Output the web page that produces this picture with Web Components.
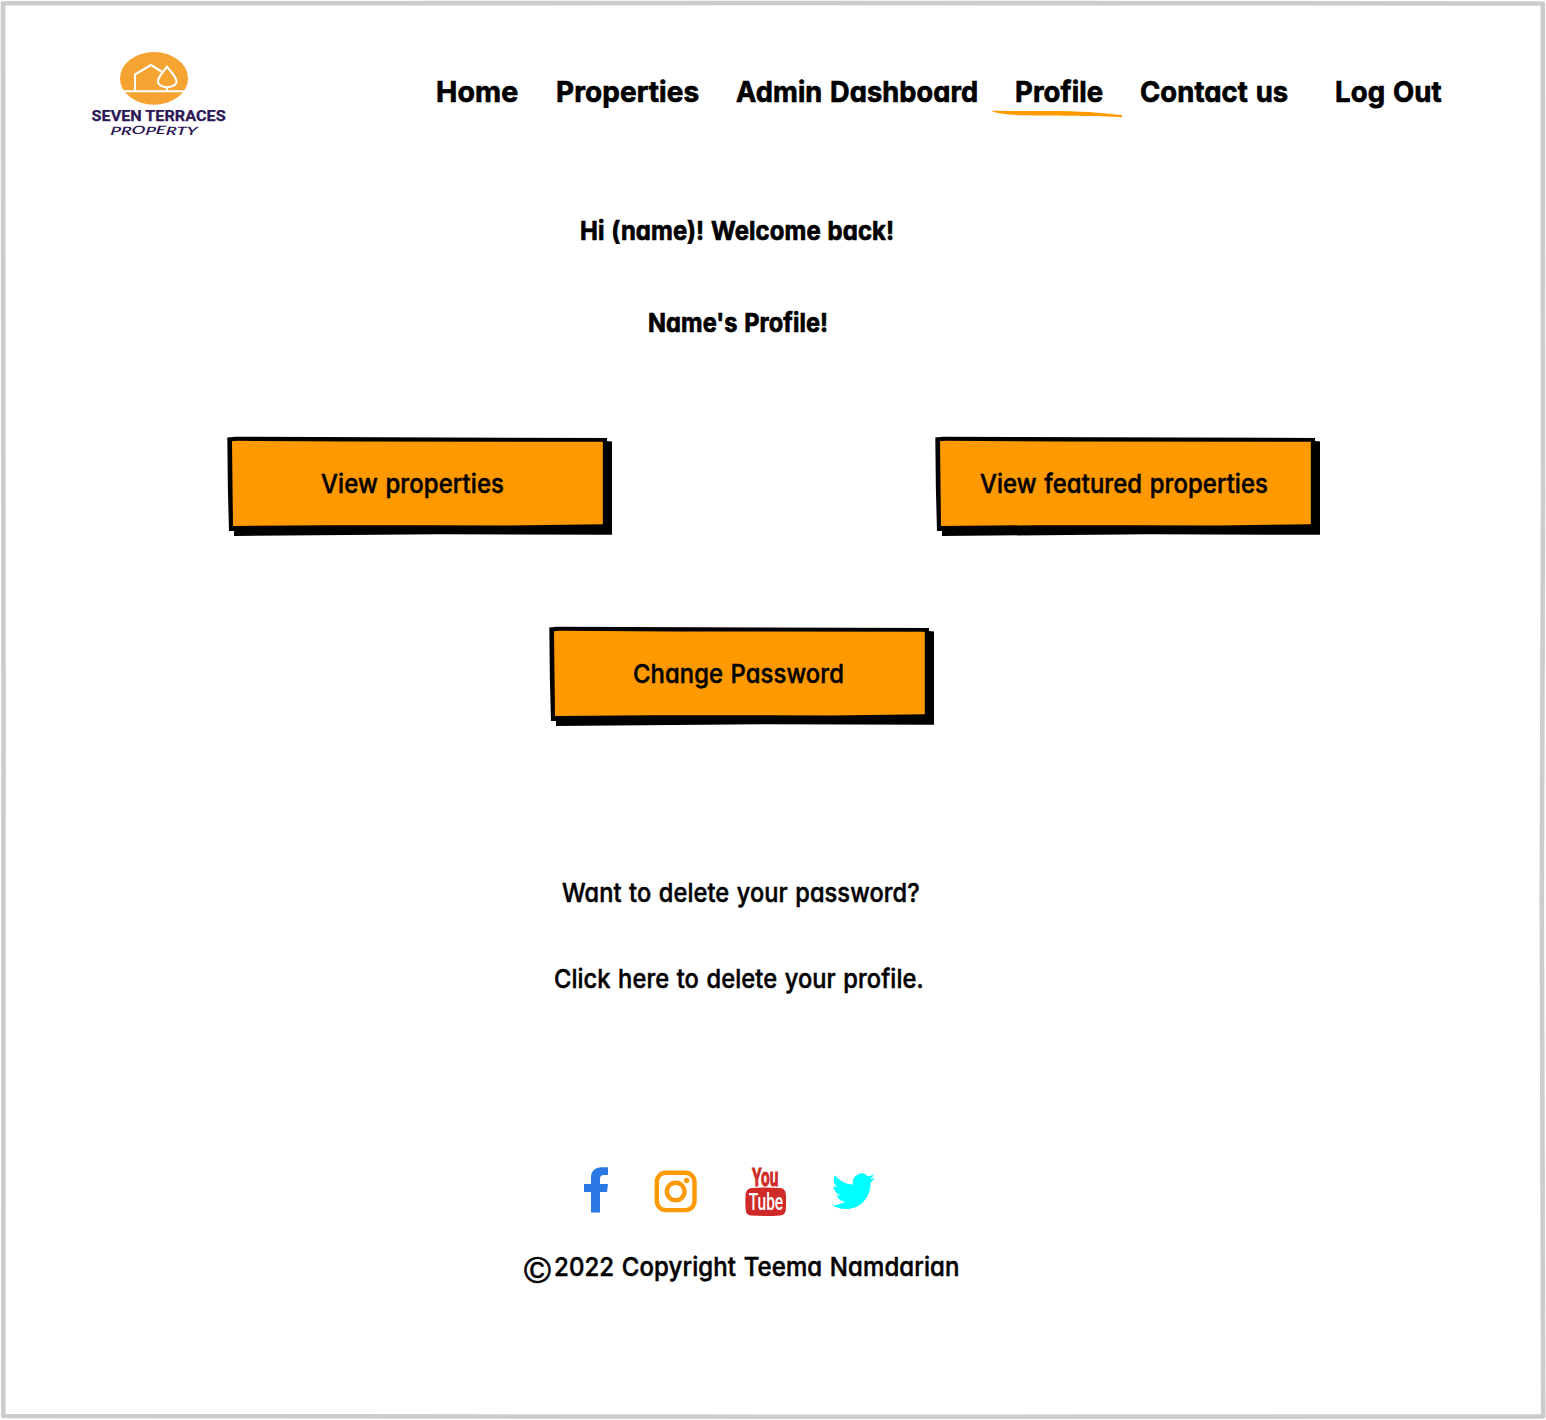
<!DOCTYPE html>
<html lang="en">
<head>
<meta charset="utf-8">
<title>Seven Terraces Property</title>
<style>
html,body{margin:0;background:#fff}
</style>
</head>
<body>
<profile-page></profile-page>
<script>
const define = (name, html, init) => {
  const t = document.createElement('template');
  t.innerHTML = html;
  customElements.define(name, class extends HTMLElement {
    connectedCallback() {
      if (this.shadowRoot) return;
      this.attachShadow({mode: 'open'}).append(t.content.cloneNode(true));
      if (init) init.call(this, this.shadowRoot);
    }
  });
};

/* One line of lettering, condensed so that its ink fills the given width. */
const pen = document.createElement('canvas').getContext('2d');
class SketchText extends HTMLElement {
  connectedCallback() {
    if (this.shadowRoot) return;
    const root = this.attachShadow({mode: 'open'});
    root.innerHTML = `<style>
      :host{display:block;flex:none;white-space:nowrap;line-height:40px;height:40px;color:#000;
        font-feature-settings:"cv11" 1,"calt" 0;font-kerning:normal}
      span{display:inline-block;transform-origin:0 50%;-webkit-text-stroke:var(--ink,.5px) #000;stroke-linejoin:round}
    </style><span><slot></slot></span>`;
    const w = +this.getAttribute('w'), size = +(this.getAttribute('size') || 26), weight = this.getAttribute('weight') || 500;
    const family = (this.getAttribute('face') || 'Inter') + ', "Liberation Sans", sans-serif';
    const s = root.querySelector('span');
    this.style.width = w + 'px';
    s.style.fontFamily = family;
    s.style.fontSize = size + 'px';
    s.style.fontWeight = weight;
    s.style.letterSpacing = '.1px';
    s.style.wordSpacing = '1.2px';
    pen.font = `${weight} ${size}px ${family}`;
    const m = pen.measureText(this.textContent);
    const l = -m.actualBoundingBoxLeft, r = m.width - m.actualBoundingBoxRight + .1;
    const n = s.getBoundingClientRect().width;
    const k = w / (n - l - r);
    s.style.transform = `scaleX(${k})`;
    s.style.marginLeft = -l * k - .3 + 'px';
  }
}
customElements.define('sketch-text', SketchText);

define('brand-logo', `<style>:host{display:block;flex:none;width:150px;height:100px}svg{display:block}</style>
<svg width="150" height="100" viewBox="84 44 150 100">
  <ellipse cx="154" cy="78.4" rx="34" ry="26.4" fill="#f5a331"/>
  <g fill="none" stroke="#fff" stroke-width="2.1" stroke-linejoin="round">
    <path d="M123.5 91.2H184.5"/>
    <path d="M135 91V74.5L151 65L161.500 71.5"/>
    <path d="M167 66.5C164.5 71 158 76 158 81.5C158 85 162 87.3 167 87.3C172 87.3 176.5 85 176.5 81.5C176.5 76 169.500 71 167 66.500ZM167 87V91"/>
  </g>
  <text x="91.600" y="121" textLength="134" lengthAdjust="spacingAndGlyphs" font-family="Roboto,sans-serif" font-weight="700" font-size="15" fill="#2c1654" stroke="#2c1654" stroke-width=".25">SEVEN TERRACES</text>
  <text transform="translate(110 134.600) skewX(-6)" dy="0 .4 -.6 .5 -.5 .4 -.3 .6" textLength="87" lengthAdjust="spacingAndGlyphs" font-family="Lato,sans-serif" font-style="italic" font-weight="600" font-size="11.500" fill="#2c1654">PROPERTY</text>
</svg>`);

define('nav-link', `<style>
:host{display:block;position:relative;flex:none;--ink:.7px}
svg{display:none;position:absolute;left:-26px;top:36px}
:host([current]) svg{display:block}
</style><slot></slot>
<svg width="134" height="12" viewBox="990 108 134 12"><path fill="#f90" d="M991.200 110.800L1050 111.100C1080 111.200 1100 112.600 1122 115.200V117.200C1100 115.500 1060 116.200 1022 115.200C1005 114.500 997 113.600 991.200 110.800Z"/></svg>`);

define('site-header', `<style>
:host{display:flex;height:156px;box-sizing:border-box;padding:44px 0 0 84px}
nav{display:flex;margin:28px 0 0 203px}
</style>
<brand-logo></brand-logo>
<nav>
<nav-link style="margin-right:39px"><sketch-text w="81" size="29" weight="700">Home</sketch-text></nav-link>
<nav-link style="margin-right:37px"><sketch-text w="142" size="29" weight="700">Properties</sketch-text></nav-link>
<nav-link style="margin-right:39px"><sketch-text w="241" size="29" weight="700">Admin Dashboard</sketch-text></nav-link>
<nav-link current style="margin-right:38px"><sketch-text w="87" size="29" weight="700">Profile</sketch-text></nav-link>
<nav-link style="margin-right:48px"><sketch-text w="147" size="29" weight="700">Contact us</sketch-text></nav-link>
<nav-link><sketch-text w="106" size="29" weight="700">Log Out</sketch-text></nav-link>
</nav>`);

define('sketch-button', `<style>
:host{display:flex;position:relative;flex:none;width:385px;height:100px}
svg{position:absolute;inset:0;z-index:-1}
div{margin:28px 0 0 var(--inset)}
</style>
<svg width="385" height="100" viewBox="227 436 385 100">
  <path d="M227.300 437.600L235 436.700L607 438V441L612 441.500V534.800L440 534.300L234 536V531H229L227.900 490Z"/>
  <path fill="#f90" d="M232 441.300L237 440.800L350 441.500L602.800 441.800V524.300L510 525.600L420 525.200L330 525.200L233 526Z"/>
</svg><div><slot></slot></div>`);

define('social-row', `<style>:host{display:block;width:300px;height:72px}svg{display:block}</style>
<svg width="300" height="72" viewBox="580 1148 300 72">
  <path fill="#2a78e4" d="M608 1167.300H602C594.500 1167.300 591 1171.600 591 1177.500V1183.900H584V1192H591V1212.500H600V1192H607L608 1183.900H600V1179C600 1176.400 601 1175.100 604 1175.100H608Z"/>
  <g fill="none" stroke="#f90" stroke-width="4.400"><rect x="656.800" y="1172.800" width="37.700" height="37.300" rx="9"/><circle cx="675.700" cy="1191.500" r="8.800"/></g>
  <circle cx="686.600" cy="1180.500" r="2.700" fill="#f90"/>
  <g font-family="Roboto,sans-serif">
    <path fill="#cf2a27" d="M752 1188Q766 1187 780 1188Q785.500 1188.500 785.800 1194Q786.400 1202 785.800 1210Q785.200 1215.200 780 1215.500Q766 1216.500 751 1215.500Q746 1215 745.700 1210Q745 1202 745.700 1194Q746.300 1188.500 752 1188Z"/>
    <text transform="translate(752 1185.700) scale(.6 1)" textLength="44" lengthAdjust="spacingAndGlyphs" font-weight="700" font-size="25.500" fill="#cf2a27" stroke="#cf2a27" stroke-width=".9">You</text>
    <text transform="translate(748.700 1210.300) scale(.65 1)" textLength="53" lengthAdjust="spacingAndGlyphs" font-weight="500" font-size="24" fill="#fff">Tube</text>
  </g>
  <path fill="#0ff" transform="translate(832 1169.500) scale(1.790 1.820)" d="M23.953 4.570a10 10 0 01-2.825.775 4.958 4.958 0 002.163-2.723c-.951.555-2.005.959-3.127 1.184a4.920 4.920 0 00-8.384 4.482C7.690 8.095 4.067 6.130 1.640 3.162a4.822 4.822 0 00-.666 2.475c0 1.710.870 3.213 2.188 4.096a4.904 4.904 0 01-2.228-.616v.060a4.923 4.923 0 003.946 4.827 4.996 4.996 0 01-2.212.085 4.936 4.936 0 004.604 3.417 9.867 9.867 0 01-6.102 2.105c-.390 0-.779-.023-1.170-.067a13.995 13.995 0 007.557 2.209c9.053 0 13.998-7.496 13.998-13.985 0-.210 0-.420-.015-.630A9.935 9.935 0 0024 4.590z"/>
</svg>`);

define('profile-page', `<style>
:host{display:block;position:relative;isolation:isolate;width:1546px;height:1420px;overflow:hidden}
.frame{position:absolute;inset:0;z-index:-1}
main,footer{display:flex;flex-direction:column;align-items:flex-start}
.row{display:flex}
.bold{--ink:.7px}
</style>
<svg class="frame" width="1546" height="1420" fill="none" stroke="#ccc" stroke-width="4.600" stroke-linejoin="round"><path d="M3 3.300L800 3L1542.800 3.500L1543 500L1541.800 900L1543.200 1416.500L800 1416.800L3.300 1416L3.500 700Z"/></svg>
<site-header></site-header>
<main>
<sketch-text class="bold" w="311.500" weight="700" style="margin:55px 0 0 581px">Hi (name)! Welcome back!</sketch-text>
<sketch-text class="bold" w="177.500" weight="700" style="margin:52px 0 0 649.500px">Name's Profile!</sketch-text>
<div class="row" style="margin:93px 0 0 227px;gap:323px">
<sketch-button style="--inset:94.500px"><sketch-text w="182">View properties</sketch-text></sketch-button>
<sketch-button style="--inset:45.500px"><sketch-text w="287">View featured properties</sketch-text></sketch-button>
</div>
<sketch-button style="margin:90px 0 0 549px;--inset:85px"><sketch-text w="209">Change Password</sketch-text></sketch-button>
<sketch-text w="357" style="margin:147px 0 0 562.500px">Want to delete your password?</sketch-text>
<sketch-text w="367" style="margin:46px 0 0 555px">Click here to delete your profile.</sketch-text>
</main>
<footer>
<social-row style="margin:149px 0 0 580px"></social-row>
<div class="row" style="margin:27px 0 0 524px;gap:4px">
<sketch-text w="27" size="36.500" weight="400" face="Liberation Sans" style="margin-top:4px;--ink:.7px">©</sketch-text>
<sketch-text w="403">2022 Copyright Teema Namdarian</sketch-text>
</div>
</footer>`);
</script>
</body>
</html>
